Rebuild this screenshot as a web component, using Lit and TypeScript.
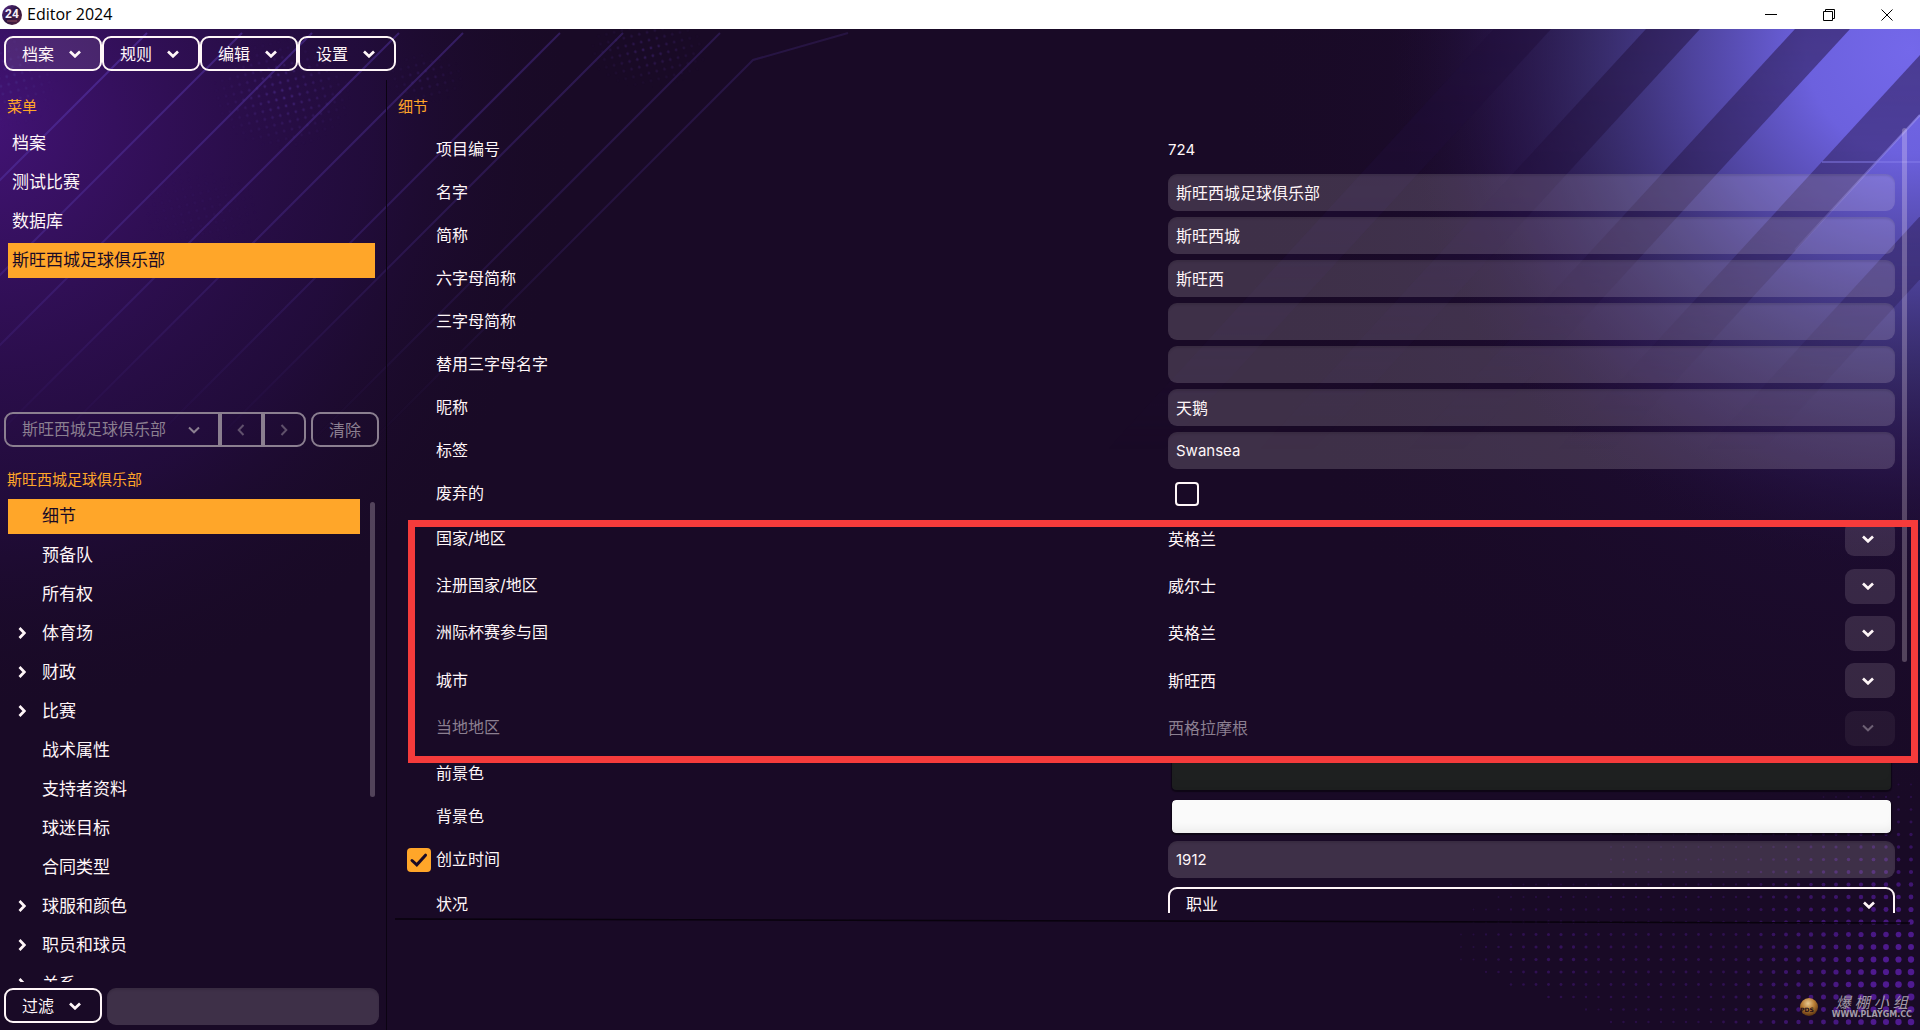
import { LitElement, html, svg, css, nothing, type TemplateResult } from "lit";
import { customElement, property, state } from "lit/decorators.js";
import { classMap } from "lit/directives/class-map.js";

type Direction = "down" | "left" | "right";

const CHEVRONS: Record<Direction, { box: string; w: number; h: number; d: string }> = {
  down: { box: "0 0 12 8", w: 12, h: 8, d: "M1 1.5 L6 6.3 L11 1.5" },
  left: { box: "0 0 8 12", w: 8, h: 12, d: "M6.5 1 L1.7 6 L6.5 11" },
  right: { box: "0 0 8 12", w: 8, h: 12, d: "M1.5 1 L6.3 6 L1.5 11" },
};

/** Small arrow used by menus, lists and tree nodes. */
@customElement("chevron-icon")
export class ChevronIcon extends LitElement {
  @property() direction: Direction = "down";
  @property({ type: Number }) weight = 2.7;

  static styles = css`
    :host {
      display: inline-flex;
      flex: none;
      pointer-events: none;
    }
    .mark {
      display: block;
      fill: none;
      stroke: currentColor;
    }
  `;

  render() {
    const c = CHEVRONS[this.direction];
    return html`<svg class="mark" viewBox=${c.box} width=${c.w} height=${c.h} aria-hidden="true">
      <path d=${c.d} stroke-width=${this.weight}></path>
    </svg>`;
  }
}

interface Dot {
  x: number;
  y: number;
  r: number;
  o: number;
}

/** Halftone dots in the lower right corner: they grow towards the window edge. */
function halftone(): Dot[] {
  const dots: Dot[] = [];
  const step = 12.5;
  for (let row = 0; row < 22; row++) {
    for (let col = 0; col < 38; col++) {
      const x = 1911 - col * step;
      const y = 1022 - row * step;
      const corner = Math.hypot((x - 1925) / 260, (y - 995) / 230);
      const right = Math.max(0, 1 - corner);
      const cluster = Math.max(0, 1 - Math.hypot((x - 1560) / 120, (y - 955) / 90));
      const belowEdge = y > 967 + (x - 1460) * 0.37;
      const mid = x > 1600 ? 0.25 * Math.max(0, 1 - Math.abs(y - 960) / 150) : 0;
      const level = belowEdge ? 0 : Math.max(right, cluster * 0.35, mid);
      if (level > 0.04) {
        dots.push({ x, y, r: 0.8 + level * 2.8, o: Math.min(1, 0.15 + level * 1.1) });
      }
    }
  }
  return dots;
}

const DOTS = halftone();

/* Each number is x + y along a 45 degree stroke. */
const STROKES = [180, 275, 345, 432, 496, 593, 656, 753];

/* Left and right x, at the top edge, of the dark bands over the glow. */
const BANDS: [number, number][] = [
  [1494, 1551],
  [1646, 1700],
  [1795, 1850],
  [1944, 1999],
  [2092, 2150],
];

/** Decorative backdrop of the editor window. */
@customElement("editor-backdrop")
export class EditorBackdrop extends LitElement {
  static styles = css`
    :host {
      display: block;
    }
    .art {
      display: block;
      width: 100%;
      height: 100%;
    }
  `;

  render() {
    return html`<svg class="art" viewBox="0 29 1920 1001" preserveAspectRatio="none" aria-hidden="true">
      <defs>
        <radialGradient id="violet" gradientUnits="userSpaceOnUse" cx="-20" cy="120" r="600">
          <stop offset="0" stop-color="#431377"></stop>
          <stop offset="0.3" stop-color="#35105f" stop-opacity="0.85"></stop>
          <stop offset="0.65" stop-color="#270d48" stop-opacity="0.6"></stop>
          <stop offset="1" stop-color="#190a26" stop-opacity="0"></stop>
        </radialGradient>
        <radialGradient id="glow" gradientUnits="userSpaceOnUse" cx="1910" cy="50" r="520">
          <stop offset="0" stop-color="#7468ea"></stop>
          <stop offset="0.2" stop-color="#6c61de"></stop>
          <stop offset="0.42" stop-color="#5349a8" stop-opacity="0.9"></stop>
          <stop offset="0.62" stop-color="#41377f" stop-opacity="0.65"></stop>
          <stop offset="0.8" stop-color="#301c5c" stop-opacity="0.45"></stop>
          <stop offset="1" stop-color="#1f0c36" stop-opacity="0"></stop>
        </radialGradient>
        <radialGradient id="haze" gradientUnits="userSpaceOnUse" cx="1900" cy="150" r="680">
          <stop offset="0" stop-color="#2a1a5a" stop-opacity="0.75"></stop>
          <stop offset="0.55" stop-color="#200e3a" stop-opacity="0.5"></stop>
          <stop offset="1" stop-color="#190a26" stop-opacity="0"></stop>
        </radialGradient>
        <linearGradient id="stroke" gradientUnits="userSpaceOnUse" x1="100" y1="29" x2="620" y2="500">
          <stop offset="0" stop-color="#5230a0" stop-opacity="0.75"></stop>
          <stop offset="0.5" stop-color="#40257a" stop-opacity="0.6"></stop>
          <stop offset="1" stop-color="#332058" stop-opacity="0.3"></stop>
        </linearGradient>
        <linearGradient id="drop" gradientUnits="userSpaceOnUse" x1="0" y1="29" x2="0" y2="450">
          <stop offset="0" stop-color="#fff"></stop>
          <stop offset="0.5" stop-color="#bbb"></stop>
          <stop offset="1" stop-color="#000"></stop>
        </linearGradient>
        <mask id="dropmask" maskUnits="userSpaceOnUse" x="0" y="29" width="1920" height="421">
          <rect x="0" y="29" width="1920" height="421" fill="url(#drop)"></rect>
        </mask>
        <linearGradient id="edge" gradientUnits="userSpaceOnUse" x1="1920" y1="115" x2="1795" y2="250">
          <stop offset="0" stop-color="#9a90f2" stop-opacity="0.7"></stop>
          <stop offset="1" stop-color="#9a90f2" stop-opacity="0.1"></stop>
        </linearGradient>
        <pattern id="speckle" width="8" height="8" patternUnits="userSpaceOnUse" patternTransform="rotate(-14)">
          <circle cx="4" cy="4" r="1.4" fill="#462783"></circle>
        </pattern>
        <radialGradient id="spot">
          <stop offset="0" stop-color="#bbb"></stop>
          <stop offset="1" stop-color="#000"></stop>
        </radialGradient>
        <mask id="spots" maskUnits="userSpaceOnUse" x="0" y="29" width="900" height="300">
          <ellipse cx="282" cy="94" rx="70" ry="55" fill="url(#spot)"></ellipse>
          <ellipse cx="8" cy="80" rx="50" ry="50" fill="url(#spot)"></ellipse>
          <ellipse cx="648" cy="52" rx="60" ry="36" fill="url(#spot)" opacity="0.7"></ellipse>
          <ellipse cx="425" cy="78" rx="40" ry="26" fill="url(#spot)" opacity="0.5"></ellipse>
          <ellipse cx="200" cy="210" rx="60" ry="40" fill="url(#spot)" opacity="0.2"></ellipse>
        </mask>
      </defs>
      <rect x="0" y="29" width="1920" height="1001" fill="#190a26"></rect>
      <rect x="0" y="29" width="800" height="700" fill="url(#violet)"></rect>
      <rect x="0" y="29" width="900" height="300" fill="url(#speckle)" mask="url(#spots)"></rect>
      <g stroke="url(#stroke)" stroke-width="2" fill="none" mask="url(#dropmask)">
        ${STROKES.map((s) => svg`<path d="M${s - 33} 33 L${s - 450} 450"></path>`)}
        <path d="M848 33 L753 60 L363 450"></path>
      </g>
      <rect x="1100" y="29" width="820" height="900" fill="url(#haze)"></rect>
      <rect x="1300" y="29" width="620" height="600" fill="url(#glow)"></rect>
      <g fill="#1f0d3a" fill-opacity="0.5" mask="url(#dropmask)">
        ${BANDS.map(
          ([a, b]) => svg`<path d="M${a} 29 L${b} 29 L${b - 386} 449 L${a - 386} 449 Z"></path>`,
        )}
      </g>
      <path d="M1920 115 L1795 250" stroke="url(#edge)" stroke-width="2"></path>
      <path d="M1822 162 H1920" stroke="#8a80ee" stroke-width="2" stroke-opacity="0.45"></path>
      <g fill="#4f1a90">
        ${DOTS.map((d) => svg`<circle cx=${d.x} cy=${d.y} r=${d.r} opacity=${d.o}></circle>`)}
      </g>
      <path d="M395 919 L1910 923" stroke="#08020c" stroke-width="1.5"></path>
    </svg>`;
  }
}

interface TreeNode {
  label: string;
  expandable: boolean;
}

interface Field {
  id: string;
  label: string;
  value: string;
  latin?: boolean;
  disabled?: boolean;
}

const MENUS = ["档案", "规则", "编辑", "设置"];
const SECTIONS = ["档案", "测试比赛", "数据库", "斯旺西城足球俱乐部"];

const TREE: TreeNode[] = [
  { label: "细节", expandable: false },
  { label: "预备队", expandable: false },
  { label: "所有权", expandable: false },
  { label: "体育场", expandable: true },
  { label: "财政", expandable: true },
  { label: "比赛", expandable: true },
  { label: "战术属性", expandable: false },
  { label: "支持者资料", expandable: false },
  { label: "球迷目标", expandable: false },
  { label: "合同类型", expandable: false },
  { label: "球服和颜色", expandable: true },
  { label: "职员和球员", expandable: true },
  { label: "关系", expandable: true },
];

const TEXT_FIELDS: Field[] = [
  { id: "name", label: "名字", value: "斯旺西城足球俱乐部" },
  { id: "short-name", label: "简称", value: "斯旺西城" },
  { id: "six-letter", label: "六字母简称", value: "斯旺西" },
  { id: "three-letter", label: "三字母简称", value: "" },
  { id: "alt-three-letter", label: "替用三字母名字", value: "" },
  { id: "nickname", label: "昵称", value: "天鹅" },
  { id: "hashtag", label: "标签", value: "Swansea", latin: true },
];

const PLACE_FIELDS: Field[] = [
  { id: "nation", label: "国家/地区", value: "英格兰" },
  { id: "registered-nation", label: "注册国家/地区", value: "威尔士" },
  { id: "continental-nation", label: "洲际杯赛参与国", value: "英格兰" },
  { id: "city", label: "城市", value: "斯旺西" },
  { id: "local-area", label: "当地地区", value: "西格拉摩根", disabled: true },
];

@customElement("app-root")
export class AppRoot extends LitElement {
  @state() private section = 3;
  @state() private node = 0;

  static styles = css`
    :host {
      display: flex;
      flex-direction: column;
      height: 100vh;
      font-family: Inter, "Noto Sans CJK SC", sans-serif;
      font-size: 16px;
      line-height: 24px;
      color: #fff6f8;
      background: #190a26;
      --amber: #ffa629;
      --field: rgba(255, 240, 246, 0.165);
      --rule: #0b0312;
    }
    *,
    *::before,
    *::after {
      box-sizing: border-box;
    }
    button,
    input,
    select {
      font: inherit;
      color: inherit;
      margin: 0;
      padding: 0;
      border: 0;
      background: none;
      appearance: none;
      min-width: 0;
      opacity: 1;
    }
    ul {
      list-style: none;
      margin: 0;
      padding: 0;
    }

    .titlebar {
      flex: none;
      display: flex;
      align-items: center;
      gap: 5px;
      height: 29px;
      padding: 0 4px 0 2px;
      background: #fff;
      color: #000;
      font-family: "Open Sans", "Noto Sans CJK SC", sans-serif;
      font-size: 16px;
    }
    .window-name {
      flex: 1;
      padding-bottom: 1px;
    }
    .logo {
      flex: none;
      display: block;
    }
    .window-buttons {
      display: flex;
    }
    .window-button {
      display: grid;
      place-items: center;
      width: 58px;
      height: 29px;
    }
    .window-glyph {
      display: block;
      fill: none;
      stroke: #000;
    }

    .workspace {
      position: relative;
      flex: 1;
      min-height: 0;
      display: flex;
      flex-direction: column;
      overflow: hidden;
    }
    .backdrop {
      position: absolute;
      inset: 0;
    }
    .menubar {
      position: relative;
      flex: none;
      display: flex;
      padding: 7px 4px 9px;
    }
    .outlined {
      display: flex;
      align-items: center;
      justify-content: space-between;
      height: 35px;
      border: 2px solid currentColor;
      border-radius: 9px;
    }
    .menu-button {
      width: 98px;
      padding: 0 19px 0 16px;
    }
    .menu-button.hot {
      background: rgba(255, 240, 246, 0.1);
    }

    .columns {
      position: relative;
      flex: 1;
      min-height: 0;
      display: flex;
    }
    .sidebar {
      flex: none;
      width: 387px;
      display: flex;
      flex-direction: column;
      padding: 16px 0 5px;
      border-right: 1px solid var(--rule);
    }
    .heading {
      flex: none;
      margin: 0;
      font-size: 15px;
      font-weight: 400;
      line-height: 22px;
      color: var(--amber);
    }
    .sidebar .heading {
      padding-left: 7px;
    }
    .list {
      display: flex;
      flex-direction: column;
      gap: 4px;
      font-size: 17px;
    }
    .item {
      display: flex;
      align-items: center;
      width: 100%;
      height: 35px;
      padding-bottom: 2px;
      text-align: left;
    }
    .item.selected {
      background: var(--amber);
      color: #190a26;
    }
    .sections {
      height: 286px;
      margin-top: 8px;
      padding: 0 11px 0 8px;
    }
    .sections .item {
      padding-left: 4px;
    }

    .history {
      flex: none;
      display: flex;
      padding-left: 4px;
      color: #8b7f90;
    }
    .picker {
      display: grid;
      align-items: center;
    }
    .picker > * {
      grid-area: 1 / 1;
    }
    .picker chevron-icon {
      justify-self: end;
      margin-right: 20px;
    }
    .picker select {
      width: 100%;
      padding: 0 36px 1px 16px;
    }
    .history .picker {
      width: 216px;
    }
    .history select {
      border-radius: 9px 0 0 9px;
    }
    .step {
      width: 43px;
      padding-right: 2px;
      justify-content: center;
      border-radius: 0;
    }
    .step chevron-icon {
      opacity: 0.6;
    }
    .step.last {
      border-radius: 0 9px 9px 0;
    }
    .clear {
      width: 68px;
      margin-left: 5px;
      justify-content: center;
    }

    .history + .heading {
      margin-top: 22px;
    }
    .tree {
      flex: 1;
      min-height: 0;
      display: flex;
      gap: 10px;
      margin-top: 8px;
      padding: 0 11px 0 8px;
      overflow: hidden;
    }
    .tree .list {
      flex: 1;
    }
    .tree .item {
      gap: 16px;
      padding-left: 10px;
    }
    .twist {
      flex: none;
      display: flex;
      justify-content: flex-end;
      width: 8px;
    }
    .thumb {
      flex: none;
      width: 5px;
      border-radius: 3px;
      background: rgba(255, 240, 246, 0.25);
    }
    .tree .thumb {
      height: 61%;
      margin-top: 3px;
    }
    .filter {
      flex: none;
      display: flex;
      gap: 5px;
      margin-top: 6px;
      padding: 0 7px 0 4px;
    }
    .field {
      width: 100%;
      height: 37px;
      padding: 0 8px 2px;
      border-radius: 9px;
      background: var(--field);
      box-shadow: inset 0 2px 2px rgba(0, 0, 0, 0.1);
    }
    .latin {
      padding-bottom: 0;
      font-size: 15px;
    }
    .filter .field {
      flex: 1;
    }

    .main {
      flex: 1;
      min-width: 0;
      display: flex;
      flex-direction: column;
      padding-top: 16px;
    }
    .main .heading {
      padding-left: 11px;
    }
    .form {
      flex: 1;
      min-height: 0;
      display: flex;
      gap: 7px;
      margin-top: 10px;
      padding: 0 13px 0 20px;
      overflow: hidden;
    }
    .rows {
      flex: 1;
      min-width: 0;
    }
    .form .thumb {
      height: 68%;
    }
    .row {
      display: grid;
      grid-template-columns: 24px minmax(0, 1fr) minmax(0, 1fr);
      column-gap: 5px;
      align-items: center;
      height: 43px;
    }
    .row .name {
      grid-column: 2;
      grid-row: 1;
      padding-bottom: 2px;
    }
    .row .value {
      grid-column: 3;
      grid-row: 1;
    }
    .row .lead {
      grid-column: 1;
      grid-row: 1;
    }
    .row.tall {
      height: 47px;
    }
    .row.dim {
      color: #8b7f90;
    }
    .places {
      position: relative;
      display: grid;
      grid-auto-rows: 1fr;
      height: 237px;
    }
    .places .row {
      height: auto;
    }
    .highlight {
      position: absolute;
      inset: 5px -23px -11px 1px;
      border: 7px solid #f53b3b;
      pointer-events: none;
      z-index: 1;
    }
    .choice {
      display: flex;
      align-items: center;
      justify-content: space-between;
    }
    .open {
      display: grid;
      place-items: center;
      width: 50px;
      height: 35px;
      padding-right: 4px;
      border-radius: 9px;
      background: rgba(255, 240, 246, 0.13);
    }
    .open:disabled {
      background: rgba(255, 240, 246, 0.06);
    }
    .open:disabled chevron-icon {
      opacity: 0.7;
    }
    .tick {
      display: grid;
      width: 24px;
      height: 24px;
    }
    .tick > * {
      grid-area: 1 / 1;
    }
    .tick input {
      width: 24px;
      height: 24px;
      border: 2px solid currentColor;
      border-radius: 4px;
    }
    .tick input:checked {
      border: 0;
      background: var(--amber);
    }
    .tick svg {
      display: none;
      pointer-events: none;
    }
    .tick input:checked + svg {
      display: block;
    }
    .value.tick {
      margin-left: 7px;
    }
    .well {
      display: flex;
      padding: 0 4px 1px;
    }
    .swatch {
      flex: 1;
      height: 33px;
      border-radius: 4px;
      overflow: hidden;
      box-shadow: 0 1px 1px 1px rgba(0, 0, 0, 0.45);
    }
    .swatch::-webkit-color-swatch-wrapper {
      padding: 0;
    }
    .swatch::-webkit-color-swatch {
      border: 0;
      border-radius: 4px;
      box-shadow: inset 0 -8px 8px -4px rgba(0, 0, 0, 0.06);
    }
    .footer {
      flex: none;
      height: 117px;
    }

    .watermark {
      position: absolute;
      right: 8px;
      bottom: 10px;
      display: flex;
      align-items: center;
      gap: 14px;
      color: #a39ba8;
    }
    .ball {
      display: block;
    }
    .credit {
      display: flex;
      flex-direction: column;
      align-items: center;
    }
    .brush {
      display: flex;
      gap: 4px;
      font-family: "Noto Sans CJK SC", sans-serif;
      font-size: 15px;
      line-height: 17px;
      font-style: italic;
    }
    .site {
      font-family: "DejaVu Sans", sans-serif;
      font-size: 8px;
      font-weight: 700;
      line-height: 10px;
    }
  `;

  private tick(id: string, label: string, place: string, checked: boolean) {
    return html`<span class="tick ${place}">
      <input type="checkbox" id=${id} aria-label=${label} ?checked=${checked} />
      <svg viewBox="0 0 24 24" width="24" height="24" fill="none" aria-hidden="true">
        <path d="M5 12.5 L9.8 16.8 L18.5 7.2" stroke="#190a26" stroke-width="3" stroke-linecap="round"></path>
      </svg>
    </span>`;
  }

  private swatch(id: string, color: string) {
    return html`<span class="value well"><input class="swatch" type="color" id=${id} value=${color} /></span>`;
  }

  private row(id: string, label: string, control: TemplateResult, lead: TemplateResult | typeof nothing = nothing) {
    return html`<div class="row">
      ${lead}
      <label class="name" for=${id}>${label}</label>
      ${control}
    </div>`;
  }

  private renderTitlebar() {
    return html`<header class="titlebar">
      <svg class="logo" viewBox="0 0 20 20" width="20" height="20" aria-hidden="true">
        <defs>
          <linearGradient id="badge" x1="0" y1="0" x2="1" y2="1">
            <stop offset="0" stop-color="#5a2c86"></stop>
            <stop offset="0.5" stop-color="#2c1440"></stop>
            <stop offset="1" stop-color="#5c2440"></stop>
          </linearGradient>
        </defs>
        <circle cx="10" cy="10" r="10" fill="url(#badge)"></circle>
        <text x="10" y="13" text-anchor="middle" font-family="Roboto, sans-serif" font-size="12" font-weight="700" fill="#f4eef8">24</text>
        <path d="M5 16 H15" stroke="#8a4a5c" stroke-width="1"></path>
      </svg>
      <span class="window-name">Editor 2024</span>
      <span class="window-buttons">
        <button class="window-button" aria-label="最小化">
          <svg class="window-glyph" viewBox="0 0 12 12" width="12" height="12"><path d="M0 5.5 H12"></path></svg>
        </button>
        <button class="window-button" aria-label="还原">
          <svg class="window-glyph" viewBox="0 0 12 12" width="12" height="12">
            <path d="M0.5 2.5 H9.5 V11.5 H0.5 Z M2.5 2.5 V0.5 H11.5 V9.5 H9.5"></path>
          </svg>
        </button>
        <button class="window-button" aria-label="关闭">
          <svg class="window-glyph" viewBox="0 0 12 12" width="12" height="12">
            <path d="M0.5 0.5 L11.5 11.5 M11.5 0.5 L0.5 11.5"></path>
          </svg>
        </button>
      </span>
    </header>`;
  }

  private renderSidebar() {
    return html`<aside class="sidebar">
      <h2 class="heading">菜单</h2>
      <ul class="list sections">
        ${SECTIONS.map(
          (label, i) => html`<li>
            <button class=${classMap({ item: true, selected: i === this.section })} @click=${() => (this.section = i)}>
              ${label}
            </button>
          </li>`,
        )}
      </ul>

      <div class="history">
        <span class="picker">
          <select class="outlined" aria-label="历史记录" disabled>
            <option>斯旺西城足球俱乐部</option>
          </select>
          <chevron-icon .weight=${2}></chevron-icon>
        </span>
        <button class="outlined step" aria-label="后退" disabled>
          <chevron-icon direction="left" .weight=${2}></chevron-icon>
        </button>
        <button class="outlined step last" aria-label="前进" disabled>
          <chevron-icon direction="right" .weight=${2}></chevron-icon>
        </button>
        <button class="outlined clear" disabled>清除</button>
      </div>

      <h2 class="heading">斯旺西城足球俱乐部</h2>
      <nav class="tree">
        <ul class="list">
          ${TREE.map(
            (n, i) => html`<li>
              <button class=${classMap({ item: true, selected: i === this.node })} @click=${() => (this.node = i)}>
                <span class="twist">
                  ${n.expandable ? html`<chevron-icon direction="right"></chevron-icon>` : nothing}
                </span>
                ${n.label}
              </button>
            </li>`,
          )}
        </ul>
        <span class="thumb"></span>
      </nav>

      <div class="filter">
        <button class="outlined menu-button">过滤<chevron-icon></chevron-icon></button>
        <input class="field" type="text" aria-label="过滤" />
      </div>
    </aside>`;
  }

  private renderForm() {
    return html`<main class="main">
      <h2 class="heading">细节</h2>
      <div class="form">
        <div class="rows">
          ${this.row("item-id", "项目编号", html`<output class="value latin" id="item-id">724</output>`)}
          ${TEXT_FIELDS.map((f) =>
            this.row(
              f.id,
              f.label,
              html`<input
                class=${classMap({ value: true, field: true, latin: !!f.latin })}
                type="text"
                id=${f.id}
                .value=${f.value}
              />`,
            ),
          )}
          ${this.row("extinct", "废弃的", this.tick("extinct", "废弃的", "value", false))}
          <div class="places">
            ${PLACE_FIELDS.map(
              (f) => html`<div class=${classMap({ row: true, dim: !!f.disabled })}>
                <label class="name" for=${f.id}>${f.label}</label>
                <span class="value choice">
                  ${f.value}
                  <button class="open" id=${f.id} ?disabled=${!!f.disabled}>
                    <chevron-icon .weight=${f.disabled ? 2 : 2.7}></chevron-icon>
                  </button>
                </span>
              </div>`,
            )}
            <div class="highlight"></div>
          </div>
          ${this.row("foreground", "前景色", this.swatch("foreground", "#1e2020"))}
          ${this.row("background", "背景色", this.swatch("background", "#fafafa"))}
          ${this.row(
            "founded",
            "创立时间",
            html`<input class="value field latin" type="text" id="founded" .value=${"1912"} />`,
            this.tick("founded-known", "创立时间", "lead", true),
          )}
          <div class="row tall">
            <label class="name" for="status">状况</label>
            <span class="value picker">
              <select class="outlined" id="status">
                <option>职业</option>
              </select>
              <chevron-icon></chevron-icon>
            </span>
          </div>
        </div>
        <span class="thumb"></span>
      </div>
      <footer class="footer"></footer>
    </main>`;
  }

  render() {
    return html`
      ${this.renderTitlebar()}
      <div class="workspace">
        <editor-backdrop class="backdrop"></editor-backdrop>
        <nav class="menubar">
          ${MENUS.map(
            (label, i) => html`<button class=${classMap({ outlined: true, "menu-button": true, hot: i === 0 })}>
              ${label}<chevron-icon></chevron-icon>
            </button>`,
          )}
        </nav>
        <div class="columns">${this.renderSidebar()} ${this.renderForm()}</div>
        <div class="watermark">
          <svg class="ball" viewBox="0 0 20 20" width="20" height="20" aria-hidden="true">
            <defs>
              <radialGradient id="orb" cx="0.45" cy="0.3" r="0.7">
                <stop offset="0" stop-color="#e8c890"></stop>
                <stop offset="0.5" stop-color="#b87c34"></stop>
                <stop offset="1" stop-color="#5a3210"></stop>
              </radialGradient>
            </defs>
            <circle cx="11" cy="10" r="9" fill="url(#orb)"></circle>
            <text x="9" y="15" text-anchor="middle" font-family="DejaVu Sans, sans-serif" font-size="6" font-weight="700" fill="#1c0c18">PDS</text>
          </svg>
          <span class="credit">
            <span class="brush"><span>爆</span><span>棚</span><span>小</span><span>组</span></span>
            <span class="site">WWW.PLAYGM.CC</span>
          </span>
        </div>
      </div>
    `;
  }
}
